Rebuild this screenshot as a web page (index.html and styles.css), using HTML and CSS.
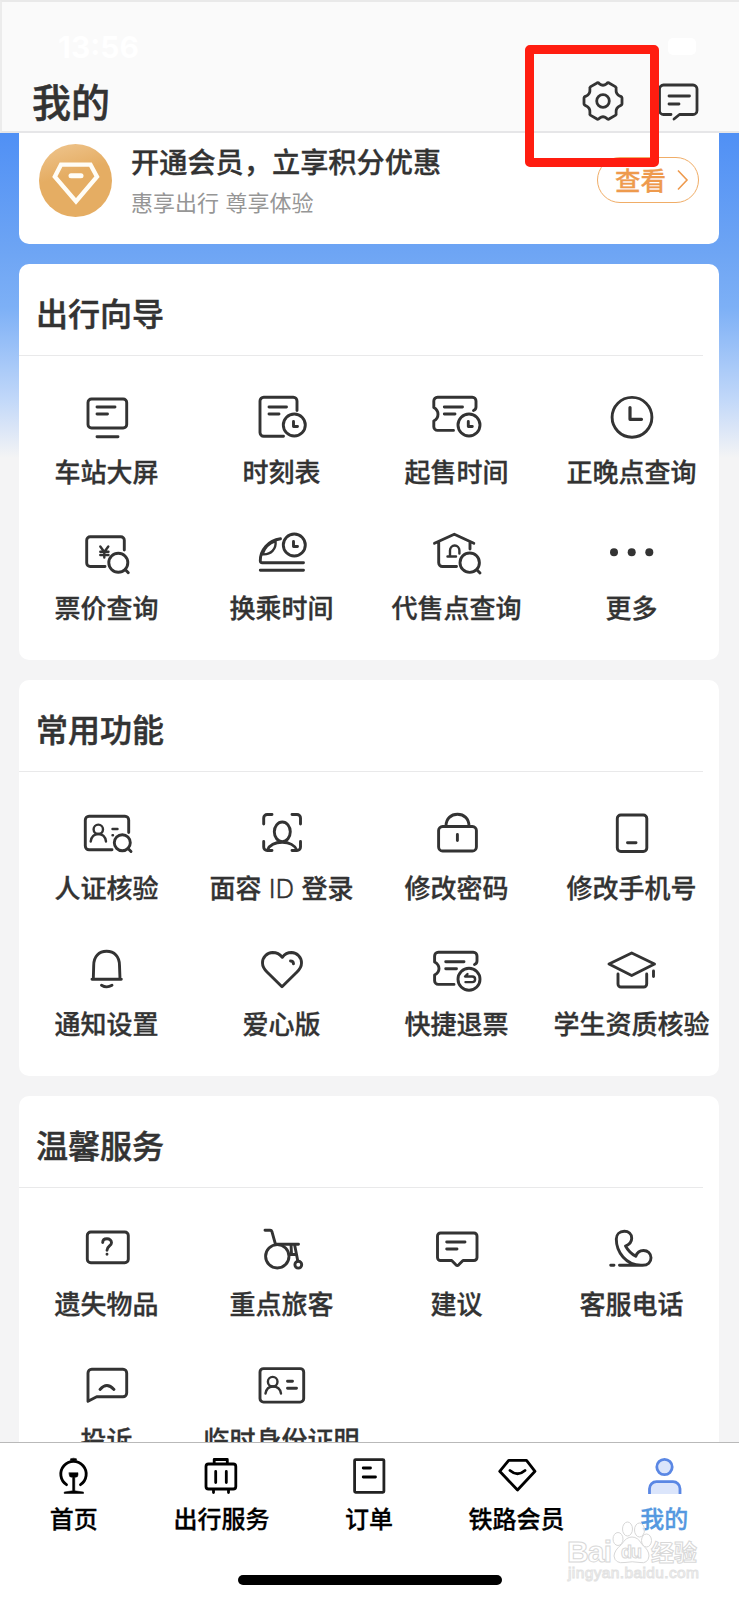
FILE: index.html
```
<!DOCTYPE html>
<html lang="zh-CN">
<head>
    <meta charset="UTF-8">
    <meta name="viewport" content="width=device-width, initial-scale=1.0">
    <title>我的</title>
    <link rel="stylesheet" href="styles.css">
</head>
<body>
    <div class="phone">
        <header class="header">
            <div class="status">
                <span class="time">13:56</span>
                <span class="battery"></span>
            </div>
            <div class="title-row">
                <h1>我的</h1>
                <div class="actions">
                    <svg class="icon-action" viewBox="0 0 44 44">
                        <path d="M15.6 4.2Q17 3.2 18.5 4.8Q22 7.6 25.5 4.8Q27 3.2 28.4 4.2L34.3 7.6Q35.6 8.6 35.1 10.2Q34.6 15.3 39 17.2Q41 17.8 41 19.2V24.8Q41 26.2 39 26.8Q34.6 28.7 35.1 33.8Q35.6 35.4 34.3 36.4L28.4 39.8Q27 40.8 25.5 39.2Q22 36.4 18.5 39.2Q17 40.8 15.6 39.8L9.7 36.4Q8.4 35.4 8.9 33.8Q9.4 28.7 5 26.8Q3 26.2 3 24.8V19.2Q3 17.8 5 17.2Q9.4 15.3 8.9 10.2Q8.4 8.6 9.7 7.6Z"/>
                        <circle cx="22" cy="22" r="6.3"/>
                    </svg>
                    <svg class="icon-action" viewBox="0 0 44 44">
                        <path d="M15 35.5H7.5a4 4 0 0 1-4-4V10a4 4 0 0 1 4-4H37a4 4 0 0 1 4 4V31.500a4 4 0 0 1-4 4H23.500L18 40M13 17H33.500M13 25H23"/>
                    </svg>
                </div>
            </div>
        </header>

        <main class="content">
            <!-- 会员卡片 -->
            <section class="card member">
                <svg class="member-logo" viewBox="0 0 73 73">
                    <defs>
                        <linearGradient id="gold" x1="0" y1="0" x2="0.3" y2="1">
                            <stop offset="0" stop-color="#efc690"/>
                            <stop offset="0.5" stop-color="#e5ad63"/>
                            <stop offset="1" stop-color="#e5ad63"/>
                        </linearGradient>
                    </defs>
                    <circle cx="36.500" cy="36.500" r="36.500" fill="url(#gold)"/>
                    <path d="M22 20.700H51.500L58 32.700 37 57.500 15.800 32.700Z" fill="none" stroke="#fffdf6" stroke-width="4.300"/>
                    <path d="M32 31.700H42" stroke="#fffdf6" stroke-width="5" stroke-linecap="round"/>
                </svg>
                <div class="member-text">
                    <p class="member-title">开通会员，立享积分优惠</p>
                    <p class="member-sub">惠享出行 尊享体验</p>
                </div>
                <a class="member-btn"><span>查看</span>
                    <svg viewBox="0 0 12 22"><path d="M1 1.500 10 11 1 20.500"/></svg>
                </a>
            </section>

            <!-- 出行向导 -->
            <section class="card">
                <h2>出行向导</h2>
                <div class="grid">
                    <div class="item">
                        <svg viewBox="0 0 60 60"><rect x="11" y="12" width="38.700" height="29" rx="3.500"/><path d="M20 20H38M20 27H30.500M20 49.700H41"/></svg>
                        <span>车站大屏</span>
                    </div>
                    <div class="item">
                        <svg viewBox="0 0 60 60"><path d="M45 23.500V14a3.700 3.700 0 0 0-3.700-3.700H11.700A3.700 3.700 0 0 0 8 14V45.600a3.700 3.700 0 0 0 3.700 3.700H31.500M17 20H34.500M17 27H27"/><circle cx="42.300" cy="38" r="11"/><path d="M41.500 34.500V39.500H45.500"/></svg>
                        <span>时刻表</span>
                    </div>
                    <div class="item">
                        <svg viewBox="0 0 60 60"><path d="M46.500 23.500Q49 22.500 49 20V14a3.700 3.700 0 0 0-3.700-3.700H10.500A3.700 3.700 0 0 0 6.800 14V20.500Q11 23 11 27.200Q11 31.500 6.800 34V39.700a3.700 3.700 0 0 0 3.700 3.700H26.500M17.300 20H35.500M17.300 27H28"/><circle cx="42" cy="38" r="11"/><path d="M41.300 34.500V39.500H45.300"/></svg>
                        <span>起售时间</span>
                    </div>
                    <div class="item">
                        <svg viewBox="0 0 60 60"><circle cx="30" cy="30.300" r="19.900"/><path d="M28 20.500V32.300H39.500" stroke-width="3.200"/></svg>
                        <span>正晚点查询</span>
                    </div>
                    <div class="item">
                        <svg viewBox="0 0 60 60"><path d="M47.300 27V17.200a3.500 3.500 0 0 0-3.500-3.500H13.200a3.500 3.500 0 0 0-3.500 3.500V40a3.500 3.500 0 0 0 3.500 3.500H28"/><path class="thin" d="M23.300 23.500 27.300 29 31.300 23.500M27.300 29V34.500M23.300 28.800H31.500M23.300 32H31.500"/><circle cx="41.300" cy="39.700" r="9.500"/><path d="M48.200 46.500 51.300 49.800"/></svg>
                        <span>票价查询</span>
                    </div>
                    <div class="item">
                        <svg viewBox="0 0 60 60"><path d="M28.500 15.700C16 17.500 8.300 27 8.300 37.700Q8.300 39.700 10.300 39.700H51.500M8.300 47.300H51.500"/><path class="thin" d="M23.500 18C16 20.500 12 26 10.500 31.300C19 32 24.500 26 23.500 18Z"/><circle cx="42.300" cy="22" r="11"/><path d="M41.500 18.500V23.500H45.500"/></svg>
                        <span>换乘时间</span>
                    </div>
                    <div class="item">
                        <svg viewBox="0 0 60 60"><path d="M7.500 20.300 27.300 11.300 46.800 20.300M11.700 19V39.800a3.700 3.700 0 0 0 3.700 3.700H29.500M43 19.500V26"/><path class="thin" d="M20.500 33.500H29M23 33.500V27.500a4.700 5 0 0 1 9.400 0V30.500"/><circle cx="42.700" cy="39.700" r="9.700"/><path d="M49.800 46.700 53 50"/></svg>
                        <span>代售点查询</span>
                    </div>
                    <div class="item">
                        <svg class="dots" viewBox="0 0 60 60"><circle cx="12" cy="29.300" r="4"/><circle cx="29.700" cy="29.300" r="4"/><circle cx="47.300" cy="29.300" r="4"/></svg>
                        <span>更多</span>
                    </div>
                </div>
            </section>

            <!-- 常用功能 -->
            <section class="card">
                <h2>常用功能</h2>
                <div class="grid">
                    <div class="item">
                        <svg viewBox="0 0 60 60"><path d="M51.700 29.500V17a3.700 3.700 0 0 0-3.700-3.700H12A3.700 3.700 0 0 0 8.300 17V43A3.700 3.700 0 0 0 12 46.700H35"/><path class="thin" d="M13.700 38.500C14.500 33.500 17 31 21.300 31S28.300 33.500 29 38.500M35.500 26H40.500M35.500 32.300H36"/><circle class="thin" cx="21.300" cy="26.300" r="4.700"/><circle cx="45.300" cy="39.700" r="8"/><path d="M51 45.500 54 48.500"/></svg>
                        <span>人证核验</span>
                    </div>
                    <div class="item">
                        <svg viewBox="0 0 60 60"><path d="M11.700 21V15a3.500 3.500 0 0 1 3.500-3.500H20M40 11.500H45a3.500 3.500 0 0 1 3.500 3.500V21M11.700 38.500V44a3.500 3.500 0 0 0 3.500 3.500H20M40 47.500H45a3.500 3.500 0 0 0 3.500-3.500V38.500M15.500 47C17.500 42.500 23 39.300 30.200 39.300S43 42.500 44.700 47"/><ellipse cx="30.300" cy="28.800" rx="8" ry="9.800"/></svg>
                        <span class="wide">面容 <i>ID</i> 登录</span>
                    </div>
                    <div class="item">
                        <svg viewBox="0 0 60 60"><rect x="11.600" y="23.500" width="37.800" height="24.500" rx="4"/><path d="M19 23C19 15.500 24 11.300 30.500 11.300S42 15.500 42 23M30.400 31.500V37.500"/></svg>
                        <span>修改密码</span>
                    </div>
                    <div class="item">
                        <svg viewBox="0 0 60 60"><rect x="15.300" y="12" width="29.500" height="36.500" rx="3.500"/><path d="M25.500 39.700H34"/></svg>
                        <span>修改手机号</span>
                    </div>
                    <div class="item">
                        <svg viewBox="0 0 60 60"><path d="M15 40.300H44.300M16.300 40 16.700 26.500C16.700 17.500 22 12.300 29.600 12.300S42.500 17.500 42.500 26.500L43 40M24.500 46.300Q29.700 49.500 35 46.300"/></svg>
                        <span>通知设置</span>
                    </div>
                    <div class="item">
                        <svg viewBox="0 0 60 60"><path d="M30.300 18.300C27 14 23.500 13.500 20.500 13.500A10.300 10.300 0 0 0 10.500 24C10.500 28 12.500 30.500 15 33L30 47.700 45 33C47.500 30.500 49.500 28 49.500 24A10.300 10.300 0 0 0 39.500 13.500C36.500 13.500 33.500 14 30.300 18.300ZM38.500 22Q41.300 22 41.500 24.800"/></svg>
                        <span>爱心版</span>
                    </div>
                    <div class="item">
                        <svg viewBox="0 0 60 60"><path d="M47.500 25.500Q50 24.500 50 22V17a3.700 3.700 0 0 0-3.700-3.700H11.300A3.700 3.700 0 0 0 7.600 17V23Q12 25.500 12 29.500Q12 33.500 7.600 36V41.700a3.700 3.700 0 0 0 3.700 3.700H27M18.700 22.700H37M18.700 29.700H29.500"/><circle cx="42" cy="40.300" r="11"/><path class="thin" d="M40.500 35 38 37.500H45.300a2.800 2.800 0 0 1 0 5.600H38.500"/></svg>
                        <span>快捷退票</span>
                    </div>
                    <div class="item">
                        <svg viewBox="0 0 60 60"><path d="M7 25 29.700 14 52.500 25 29.700 36.500ZM16 35V45a3 3 0 0 0 3 3H41.700a3 3 0 0 0 3-3V35M51.500 32V37.500"/></svg>
                        <span>学生资质核验</span>
                    </div>
                </div>
            </section>

            <!-- 温馨服务 -->
            <section class="card">
                <h2>温馨服务</h2>
                <div class="grid">
                    <div class="item">
                        <svg viewBox="0 0 60 60"><rect x="10.300" y="13" width="41" height="30.700" rx="3.500"/><path d="M25.700 23.500C25.700 21 27.500 19.700 30 19.700S34.500 21.200 34.500 23.700C34.500 27 30 27 30 31.300M30 35.200V35.300"/></svg>
                        <span>遗失物品</span>
                    </div>
                    <div class="item">
                        <svg viewBox="0 0 60 60"><path d="M13 11.300H18.200Q19.500 11.300 20 12.800L23.500 25.300H46.500M42.500 25.300 45.800 42M37.800 35.500H44M39 25.300 39.500 35"/><circle cx="25.300" cy="37.300" r="11.700"/><circle cx="46.300" cy="45.700" r="3.400"/></svg>
                        <span>重点旅客</span>
                    </div>
                    <div class="item">
                        <svg viewBox="0 0 60 60"><path d="M13.500 14H47A3 3 0 0 1 50 17V38.500A3 3 0 0 1 47 41.500H36L31.700 45.800Q30.300 47 28.900 45.800L24.700 41.500H13.500A3 3 0 0 1 10.500 38.500V17A3 3 0 0 1 13.500 14ZM19.700 23H38M19.700 30H30"/></svg>
                        <span>建议</span>
                    </div>
                    <div class="item">
                        <svg viewBox="0 0 60 60"><path d="M17.500 46.300H40.500C46 46.300 49 43 49 38.800C49 34.500 45.700 31.500 41.500 31.500C38 31.500 35 33.500 33.800 37.300C29.500 35 26 31.500 23.500 27C27.500 25.500 29.700 22.800 29.700 19.300C29.700 15 26.500 12.300 22.300 12.300C17.500 12.300 14.300 15.500 14.300 20C14.300 33 24 46.300 39 46.300M8.700 46.300H12"/></svg>
                        <span>客服电话</span>
                    </div>
                    <div class="item">
                        <svg viewBox="0 0 60 60"><path d="M11 46.300V18A3.700 3.700 0 0 1 14.700 14.300H46A3.700 3.700 0 0 1 49.700 18V38A3.700 3.700 0 0 1 46 41.700H19.700ZM23 34.500Q29.800 26.500 37 34.500"/></svg>
                        <span>投诉</span>
                    </div>
                    <div class="item">
                        <svg viewBox="0 0 60 60"><rect x="8" y="13.600" width="43.700" height="33.500" rx="3.500"/><path class="thin" d="M13.500 38.500C14.300 34 16.500 31.500 20.700 31.500S28.300 34 29 38.500"/><path d="M35.500 26.300H40.500M35.500 33.300H44.500"/><circle class="thin" cx="20.700" cy="26.700" r="4.800"/></svg>
                        <span>临时身份证明</span>
                    </div>
                </div>
            </section>
        </main>

        <!-- 底部导航 -->
        <footer class="footer">
            <nav class="tabs">
                <a class="tab">
                    <svg viewBox="0 0 44 44"><path d="M14.500 30.700A12.700 12.700 0 1 1 28.500 30.700"/><path class="solid" d="M18.500 6V4.800Q21.500 3.500 24.500 4.800V6ZM17.200 18.700H26V21Q26 23.300 23.500 23.300H22.800V36.800L31.500 38V39.500H12.200V38L20.600 36.800V23.300H19.700Q17.200 23.300 17.200 21Z"/></svg>
                    <span>首页</span>
                </a>
                <a class="tab">
                    <svg viewBox="0 0 44 44"><rect x="7" y="10" width="29.800" height="25" rx="2.500"/><path d="M15.200 9.500V5.500H28.300V9.500M16.700 17.500V28.500M27.300 17.500V28.500M14.500 36V38.500M29.500 36V38.500"/></svg>
                    <span>出行服务</span>
                </a>
                <a class="tab">
                    <svg viewBox="0 0 44 44"><rect x="7.600" y="5.600" width="29.300" height="32.700" rx="1" stroke="#222"/><path d="M16.200 14H23.500M16.200 23H28.500"/></svg>
                    <span>订单</span>
                </a>
                <a class="tab">
                    <svg viewBox="0 0 44 44"><path d="M13.700 6.300H31.500L40 17.300 22.500 36 4.700 17.300ZM15 16.500Q22.500 23 30 16.500"/></svg>
                    <span>铁路会员</span>
                </a>
                <a class="tab active">
                    <svg viewBox="0 0 44 44"><circle cx="22.500" cy="13" r="7.700"/><path d="M7.500 40V34.700A7 7 0 0 1 14.500 27.700H31A7 7 0 0 1 38 34.700V40"/></svg>
                    <span>我的</span>
                </a>
            </nav>
            <div class="home-bar"></div>
        </footer>

        <!-- 标记框和水印 -->
        <div class="mark"></div>
        <svg class="watermark" viewBox="0 0 140 70">
            <text class="wm-big" x="4" y="45" textLength="45">Bai</text>
            <g class="wm-paw">
                <ellipse cx="55" cy="22" rx="5" ry="6.500"/>
                <ellipse cx="64.500" cy="12" rx="5" ry="7"/>
                <ellipse cx="76.500" cy="13" rx="5" ry="7"/>
                <ellipse cx="83.500" cy="23.500" rx="5" ry="6.500"/>
                <path d="M69 20Q75 20 79 27.500Q86 33 86 39Q85 47 77 45.500Q69 44 62 45.500Q52 47 51 39Q51.500 33 58.500 27.500Q63 20 69 20Z"/>
            </g>
            <text class="wm-du" x="58" y="41" textLength="21">du</text>
            <text class="wm-cn" x="88" y="44" textLength="46">经验</text>
            <text class="wm-url" x="5" y="61" textLength="131">jingyan.baidu.com</text>
        </svg>
    </div>
</body>
</html>
```

FILE: styles.css
```
* {
    box-sizing: border-box;
}
body {
    margin: 0;
    font-family: "Noto Sans CJK SC", sans-serif;
    font-weight: 500;
    color: #333;
    background-color: #f4f4f5;
}
h1, h2, p {
    margin: 0;
    font-weight: 500;
}
h1, h2 {
    -webkit-text-stroke: 0.5px #333;
}
svg {
    display: block;
    flex-shrink: 0;
}
.phone {
    position: relative;
    display: flex;
    flex-direction: column;
    width: 739px;
    height: 1600px;
    overflow: hidden;
}

/* Cabecera */
.header {
    height: 133px;
    background-color: #fafafa;
    border-top: 2px solid #e9e9e9;
    border-left: 2px solid #ececec;
    border-bottom: 2px solid #e6e6e8;
    padding: 28px 39px 0 30px;
}
.status {
    display: flex;
    justify-content: space-between;
    align-items: center;
    height: 33px;
    padding: 0 4px 0 26px;
}
.time {
    font-family: Inter, sans-serif;
    font-size: 30px;
    font-weight: 700;
    color: #fff;
}
.battery {
    width: 28px;
    height: 17px;
    border-radius: 5px;
    background-color: #fff;
}
.title-row {
    display: flex;
    justify-content: space-between;
    align-items: center;
    height: 76px;
}
.title-row h1 {
    height: 76px;
    font-size: 39px;
    line-height: 74px;
}
.actions {
    display: flex;
    gap: 31px;
}
.icon-action {
    width: 44px;
    height: 44px;
    fill: none;
    stroke: #333;
    stroke-width: 2.8;
    stroke-linecap: round;
    stroke-linejoin: round;
}

/* Contenido */
.content {
    flex: 1;
    min-height: 0;
    overflow: hidden;
    display: flex;
    flex-direction: column;
    gap: 20px;
    padding: 0 20px 0 19px;
    background: linear-gradient(#5090f5 0, #6ea5f4 120px, #7db0f6 175px, #c0d7f9 265px, #f4f4f5 325px);
}
.card {
    flex-shrink: 0;
    background-color: #fff;
    border-radius: 10px;
}
.card h2 {
    height: 92px;
    margin-right: 16px;
    padding: 0 0 0 17px;
    font-size: 32px;
    line-height: 97px;
    border-bottom: 1px solid #e9e9ea;
}
.member {
    display: flex;
    align-items: flex-start;
    height: 111px;
    padding: 11px 20px 0 20px;
    border-radius: 0 0 10px 10px;
}
.member-logo {
    width: 73px;
    height: 73px;
}
.member-text {
    flex: 1;
    margin: -1px 0 0 19px;
}
.member-title {
    font-size: 28.2px;
    line-height: 36px;
    -webkit-text-stroke: 0.3px #333;
}
.member-sub {
    margin-top: 7px;
    font-size: 22px;
    line-height: 30px;
    font-weight: 400;
    word-spacing: 1.5px;
    color: #969696;
}
.member-btn {
    display: flex;
    align-items: center;
    gap: 11px;
    width: 102px;
    height: 46px;
    margin-top: 13px;
    padding-left: 17px;
    border: 1px solid #f0ad67;
    border-radius: 23px;
    font-size: 25.5px;
    color: #ee9a4d;
}
.member-btn span {
    padding-bottom: 3px;
    line-height: 40px;
    -webkit-text-stroke: 0.3px #ee9a4d;
}
.member-btn svg {
    width: 12px;
    height: 22px;
    fill: none;
    stroke: #ee9a4d;
    stroke-width: 1.6;
}
.grid {
    display: grid;
    grid-template-columns: repeat(4, 1fr);
    row-gap: 36px;
    padding: 31px 0 37px;
}
.item {
    display: flex;
    flex-direction: column;
    align-items: center;
    height: 100px;
}
.item svg {
    width: 60px;
    height: 60px;
    fill: none;
    stroke: #333;
    stroke-width: 2.9;
    stroke-linecap: round;
    stroke-linejoin: round;
}
.item .thin {
    stroke-width: 2.4;
}
.item .dots {
    fill: #333;
    stroke: none;
}
.item span {
    margin-top: 8.5px;
    font-size: 26px;
    line-height: 30px;
    white-space: nowrap;
    -webkit-text-stroke: 0.3px #333;
}
.item .wide {
    word-spacing: 1.5px;
}
.item i {
    font-family: Inter, sans-serif;
    font-style: normal;
    font-weight: 300;
}

/* Barra inferior */
.footer {
    height: 158px;
    background-color: #fff;
    border-top: 1px solid #b9b9b9;
}
.tabs {
    display: flex;
    padding: 11px 1px 0 0;
}
.tab {
    flex: 1;
    display: flex;
    flex-direction: column;
    align-items: center;
    font-size: 24px;
    line-height: 30px;
    color: #000;
}
.tab svg {
    width: 44px;
    height: 44px;
    margin-bottom: 5px;
    fill: none;
    stroke: #000;
    stroke-width: 2.8;
    stroke-linecap: round;
    stroke-linejoin: round;
}
.tab span {
    -webkit-text-stroke: 0.3px currentColor;
}
.tab .solid {
    fill: #000;
    stroke-width: 0.5;
}
.tab.active {
    color: #5598e0;
}
.tab.active svg {
    fill: #dbe5fb;
    stroke: #5a87e4;
    stroke-linecap: butt;
}
.home-bar {
    width: 264px;
    height: 10px;
    margin: 42px auto 0;
    border-radius: 5px;
    background-color: #000;
}

.mark {
    position: absolute;
    left: 525px;
    top: 45px;
    width: 134px;
    height: 122px;
    border: 9px solid #ff1d10;
    border-radius: 5px;
}
.watermark {
    position: absolute;
    left: 563px;
    top: 1517px;
    width: 140px;
    height: 70px;
    fill: rgba(255, 255, 255, 0.7);
    stroke: #d8d8d8;
    stroke-width: 1;
}
.wm-big {
    font: 700 30px "Liberation Sans", sans-serif;
}
.wm-du {
    font: 700 18px "Liberation Sans", sans-serif;
}
.wm-cn {
    font: 700 23px "Noto Sans CJK SC", sans-serif;
}
.wm-url {
    font: 400 15.5px "Liberation Sans", sans-serif;
    stroke: #e2e2e2;
}
```
